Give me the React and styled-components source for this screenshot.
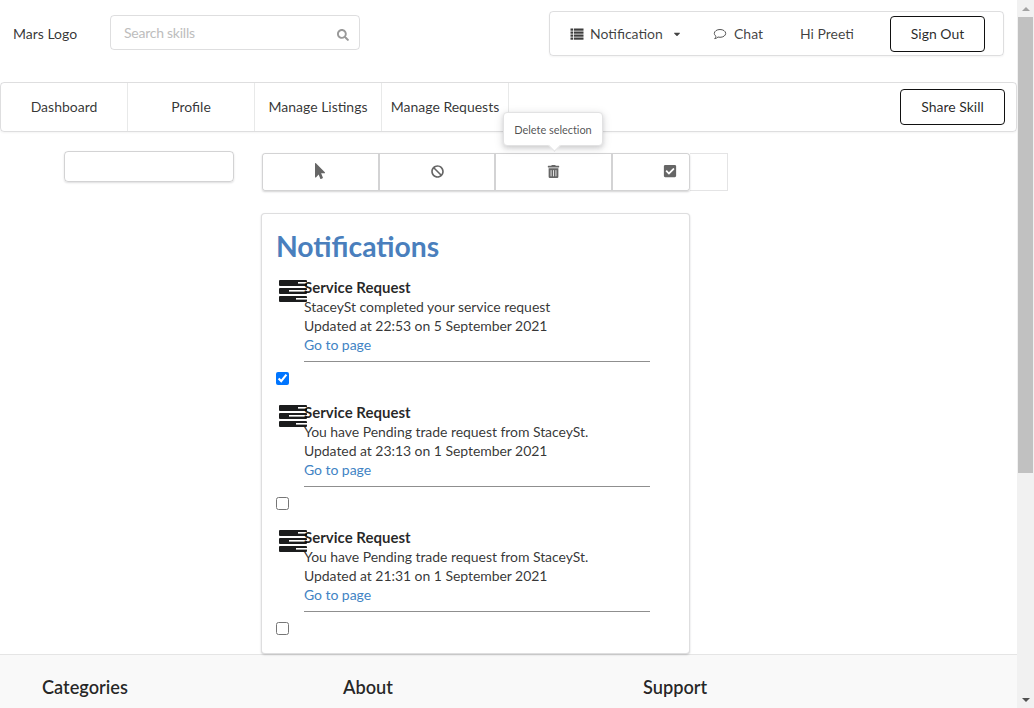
import React from "react";
import styled, { createGlobalStyle } from "styled-components";
import { FaSearch, FaCaretDown, FaMousePointer, FaBan, FaTrashAlt, FaCheckSquare } from "react-icons/fa";

const Global = createGlobalStyle`
  html, body { margin: 0; padding: 0; height: 100%; overflow: hidden; background: #fff; }
  body { font-family: Lato, "Helvetica Neue", Arial, sans-serif; font-size: 14px; color: rgba(0,0,0,.87); }
  * { box-sizing: border-box; }
`;

const Frame = styled.div`display: flex; width: 1034px; height: 708px; overflow: hidden;`;
const Page = styled.div`width: 1017px; height: 708px; overflow: hidden; flex: none;`;

const Scrollbar = styled.div`
  width: 17px; height: 708px; background: #f1f1f1; display: flex; flex-direction: column; align-items: center; flex: none;
`;
const ScrollArrow = styled.div`
  width: 17px; height: 17px; display: flex; align-items: center; justify-content: center; flex: none;
  &::before { content: ""; border-left: 4px solid transparent; border-right: 4px solid transparent;
    ${p => p.$down ? "border-top: 4px solid #505050;" : "border-bottom: 4px solid #a3a3a3;"} }
`;
const ScrollThumb = styled.div`width: 15px; height: 456px; background: #c1c1c1; flex: none;`;
const ScrollTrack = styled.div`flex: 1;`;

const TopBar = styled.div`display: flex; align-items: flex-start; height: 82px; padding: 11px 13px 0 13px;`;
const Logo = styled.div`width: 97px; padding-top: 14px; line-height: 18px; font-size: 14px; color: rgba(0,0,0,.8);`;
const Search = styled.div`
  width: 250px; height: 35px; margin-top: 4px; border: 1px solid rgba(34,36,38,.15); border-radius: 4px;
  display: flex; align-items: center; justify-content: space-between; padding: 0 10px 0 13px;
  font-size: 14px; color: #bdbdbd; letter-spacing: -.25px;
  svg { color: #999; width: 12px; height: 12px; margin-top: 4px; }
`;
const UserMenu = styled.div`
  margin-left: auto; width: 455px; height: 45px; border: 1px solid rgba(34,36,38,.15); border-radius: 4px;
  box-shadow: 0 1px 2px rgba(34,36,38,.05); display: flex; align-items: center; padding-left: 20px; font-size: 14px;
  position: relative;
`;
const MenuLabel = styled.span`
  display: inline-flex; align-items: center; color: rgba(0,0,0,.75); white-space: nowrap; width: ${p => p.$w}px; flex: none;
`;
const MenuIcon = styled.span`display: inline-flex; width: ${p => p.$w}px; svg { width: 14px; height: 14px; color: #444; } `;
const Caret = styled.span`display: inline-flex; margin-left: 9px; svg { width: 10px; height: 10px; color: #444; }`;
const OutlineButton = styled.div`
  height: 36px; width: ${p => p.$w}px; border: 1px solid #111; border-radius: 4px; display: flex; align-items: center; justify-content: center;
  padding-bottom: ${p => p.$lift ? "2px" : "0"};
  font-size: 14px; color: rgba(0,0,0,.85); flex: none;
`;

const Nav = styled.nav`
  height: 50px; border: 1px solid rgba(34,36,38,.15); border-radius: 4px; display: flex; align-items: stretch;
  box-shadow: 0 1px 2px rgba(34,36,38,.05);
`;
const NavItem = styled.div`
  width: 127px; flex: none; border-right: 1px solid rgba(34,36,38,.1); display: flex; align-items: center; justify-content: center;
  padding-bottom: 2px; font-size: 14px; color: rgba(0,0,0,.8); white-space: nowrap;
`;
const NavRight = styled.div`margin-left: auto; padding-right: 11px; display: flex; align-items: center;`;

const Body = styled.div`display: flex; align-items: flex-start; height: 522px; padding: 19px 0 0 64px;`;
const SideInput = styled.div`
  width: 170px; height: 31px; border: 1px solid rgba(34,36,38,.2); border-radius: 4px; box-shadow: 0 1px 2px rgba(34,36,38,.15); flex: none;
`;
const Column = styled.div`margin-left: 27px; width: 467px; flex: none;`;

const ToolRow = styled.div`display: flex; height: 40px; position: relative; padding-top: 2px;`;
const ToolGroup = styled.div`
  display: flex; width: 428px; height: 38px; margin-left: 1px; border: 1px solid rgba(34,36,38,.2); border-radius: 3px; box-shadow: 0 1px 2px rgba(34,36,38,.2);
`;
const Tool = styled.div`
  width: ${p => p.$w}px; flex: none; display: flex; align-items: center; padding-left: ${p => p.$pad}px; padding-bottom: 2px;
  border-right: ${p => p.$last ? "0" : "2px solid rgba(34,36,38,.2)"};
  svg { width: ${p => p.$size || 13}px; height: ${p => p.$size || 13}px; color: #666; }
`;
const ToolTail = styled.div`width: 38px; height: 38px; border: 1px solid rgba(34,36,38,.12); border-left: 0;`;
const Tooltip = styled.div`
  position: absolute; left: 242px; top: -39px; width: 100px; height: 34px; background: #fff; border: 1px solid #e2e2e3; border-radius: 4px;
  box-shadow: 0 2px 4px rgba(34,36,38,.12), 0 2px 10px rgba(34,36,38,.15); display: flex; align-items: center; justify-content: center;
  font-size: 11px; letter-spacing: -.05px; color: rgba(0,0,0,.7); z-index: 2;
  &::after { content: ""; position: absolute; left: 46px; bottom: -5px; width: 8px; height: 8px; background: #fff; transform: rotate(45deg);
    border-right: 1px solid #e2e2e3; border-bottom: 1px solid #e2e2e3; }
`;

const Card = styled.section`
  margin-top: 22px; width: 429px; height: 441px; padding: 14px 15px 0; background: #fff; border: 1px solid rgba(34,36,38,.15); border-radius: 4px;
  box-shadow: 0 1px 2px rgba(34,36,38,.2); position: relative; z-index: 1;
`;
const Heading = styled.h1`
  margin: 0 0 0 -1px; font-size: 28.3px; line-height: 36px; font-weight: 700; color: #4a7fbd;
`;
const Item = styled.article`height: 125px; padding-top: 14px;`;
const ItemRow = styled.div`display: flex; height: 94px;`;
const ServerSlot = styled.div`width: 27px; flex: none; padding: 2px 0 0 2px;`;
const ItemText = styled.div`width: 346px; flex: none; font-size: 14px; letter-spacing: -.05px; line-height: 19px; height: 84px; border-bottom: 1px solid #8f8f8f; color: rgba(0,0,0,.8);`;
const ItemTitle = styled.div`font-size: 15px; letter-spacing: 0; font-weight: 700; line-height: 20px; margin-top: -1px; color: rgba(0,0,0,.85);`;
const ItemLine = styled.div`white-space: nowrap;`;
const ItemLink = styled.a`color: #4183c4; text-decoration: none; display: block;`;
const Check = styled.input`
  display: block; margin: 0 0 0 -1px; width: 13px; height: 13px; accent-color: #0075ff;
`;

const Footer = styled.footer`
  height: 54px; background: #f9f9f9; border-top: 1px solid #e5e5e5; display: flex; padding: 20px 0 0 42px;
`;
const FooterCol = styled.h4`
  margin: 0; width: ${p => p.$w}px; font-size: 18.2px; line-height: 24px; font-weight: 600; color: rgba(0,0,0,.85); flex: none;
`;

const ServerIcon = () => (
  <svg width="28" height="22" viewBox="0 0 28 22" aria-hidden="true">
    <rect x="0" y="0" width="28" height="6" rx="1" fill="#1b1c1d" />
    <rect x="0" y="8" width="28" height="6" rx="1" fill="#1b1c1d" />
    <rect x="0" y="16" width="28" height="6" rx="1" fill="#1b1c1d" />
    <rect x="19" y="2" width="9" height="1.6" fill="#fff" />
    <rect x="10" y="10" width="18" height="1.6" fill="#fff" />
    <rect x="17" y="18" width="11" height="1.6" fill="#fff" />
  </svg>
);

const ListIcon = () => (
  <svg viewBox="0 0 14 14" aria-hidden="true" fill="#3d3d3d">
    <rect x="0.500" y="1.500" width="2.500" height="2.200" />
    <rect x="0.500" y="4.500" width="2.500" height="2.200" />
    <rect x="0.500" y="7.500" width="2.500" height="2.200" />
    <rect x="0.500" y="10.500" width="2.500" height="2.200" />
    <rect x="3.800" y="1.500" width="9.700" height="2.200" />
    <rect x="3.800" y="4.500" width="9.700" height="2.200" />
    <rect x="3.800" y="7.500" width="9.700" height="2.200" />
    <rect x="3.800" y="10.500" width="9.700" height="2.200" />
  </svg>
);

const ChatIcon = () => (
  <svg viewBox="0 0 14 14" aria-hidden="true" fill="none" stroke="#555" strokeWidth="1">
    <path d="M7 2.500c3.200 0 5.700 1.700 5.700 3.900S10.200 10.300 7 10.300c-.7 0-1.400-.1-2-.3-.8.8-1.900 1.500-3.300 1.600.7-.7 1.200-1.500 1.300-2.400C2 8.500 1.300 7.500 1.300 6.400 1.300 4.200 3.800 2.500 7 2.500z" />
  </svg>
);

const items = [
  { text: "StaceySt completed your service request", date: "Updated at 22:53 on 5 September 2021", checked: true },
  { text: "You have Pending trade request from StaceySt.", date: "Updated at 23:13 on 1 September 2021" },
  { text: "You have Pending trade request from StaceySt.", date: "Updated at 21:31 on 1 September 2021" },
];

export default function App() {
  return (
    <Frame>
      <Global />
      <Page>
        <TopBar>
          <Logo>Mars Logo</Logo>
          <Search>Search skills<FaSearch /></Search>
          <UserMenu>
            <MenuLabel $w={143}>
              <MenuIcon $w={20}><ListIcon /></MenuIcon>
              Notification
              <Caret><FaCaretDown /></Caret>
            </MenuLabel>
            <MenuLabel $w={87}>
              <MenuIcon $w={21}><ChatIcon /></MenuIcon>
              Chat
            </MenuLabel>
            <MenuLabel $w={90}>Hi Preeti</MenuLabel>
            <OutlineButton $w={95}>Sign Out</OutlineButton>
          </UserMenu>
        </TopBar>
        <Nav>
          <NavItem>Dashboard</NavItem>
          <NavItem>Profile</NavItem>
          <NavItem>Manage Listings</NavItem>
          <NavItem>Manage Requests</NavItem>
          <NavRight><OutlineButton $w={105} $lift>Share Skill</OutlineButton></NavRight>
        </Nav>
        <Body>
          <SideInput />
          <Column>
            <ToolRow>
              <ToolGroup>
                <Tool $w={117} $pad={49} $size={16}><FaMousePointer /></Tool>
                <Tool $w={116} $pad={51}><FaBan /></Tool>
                <Tool $w={117} $pad={51}><FaTrashAlt /></Tool>
                <Tool $w={76} $pad={50} $size={14} $last><FaCheckSquare /></Tool>
              </ToolGroup>
              <ToolTail />
              <Tooltip>Delete selection</Tooltip>
            </ToolRow>
            <Card>
              <Heading>Notifications</Heading>
              {items.map((it, i) => (
                <Item key={i}>
                  <ItemRow>
                    <ServerSlot><ServerIcon /></ServerSlot>
                    <ItemText>
                      <ItemTitle>Service Request</ItemTitle>
                      <ItemLine>{it.text}</ItemLine>
                      <ItemLine>{it.date}</ItemLine>
                      <ItemLink href="#">Go to page</ItemLink>
                    </ItemText>
                  </ItemRow>
                  <Check type="checkbox" defaultChecked={!!it.checked} />
                </Item>
              ))}
            </Card>
          </Column>
        </Body>
        <Footer>
          <FooterCol $w={301}>Categories</FooterCol>
          <FooterCol $w={300}>About</FooterCol>
          <FooterCol $w={200}>Support</FooterCol>
        </Footer>
      </Page>
      <Scrollbar>
        <ScrollArrow />
        <ScrollThumb />
        <ScrollTrack />
        <ScrollArrow $down />
      </Scrollbar>
    </Frame>
  );
}
